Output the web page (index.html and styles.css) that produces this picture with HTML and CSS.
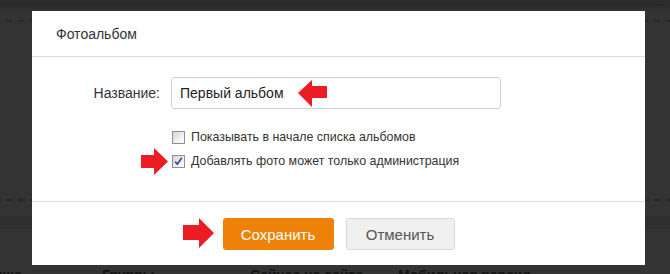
FILE: index.html
```html
<!DOCTYPE html>
<html lang="ru">
<head>
<meta charset="utf-8">
<title>Фотоальбом</title>
<link rel="stylesheet" href="styles.css">
</head>
<body>
<div class="page">
  <div class="topbar"><div class="topline"></div></div>
  <div class="dash dash-top"></div>
  <div class="dash dash-bottom"></div>
  <div class="band"></div>
  <div class="links">
    <span class="lnk lnk0">нша</span>
    <span class="lnk lnk1">Группы</span>
    <span class="lnk lnk2">Сейчас на сайте</span>
    <span class="lnk lnk3">Мобильная версия</span>
  </div>
</div>

<div class="modal">
  <div class="modal-head">Фотоальбом</div>
  <div class="modal-body">
    <div class="field">
      <label class="field-label">Название:</label>
      <div class="input">Первый альбом</div>
    </div>
    <div class="checks">
      <div class="check-row">
        <span class="box"></span>
        <span class="check-text">Показывать в начале списка альбомов</span>
      </div>
      <div class="check-row">
        <span class="box checked">
          <svg width="11" height="11" viewBox="0 0 11 11"><path d="M2.2 5.6 L4.4 8.2 L8.8 1.8" fill="none" stroke="#34489a" stroke-width="1.7"/></svg>
        </span>
        <span class="check-text">Добавлять фото может только администрация</span>
      </div>
    </div>
  </div>
  <div class="modal-foot">
    <button class="btn btn-save">Сохранить</button>
    <button class="btn btn-cancel">Отменить</button>
  </div>
</div>

<svg class="arrow arrow1" width="30" height="28" viewBox="0 0 30 28"><polygon points="0,13 14,0 14,6 29,6 29,18 14,18 14,27" fill="#ed1c24"/></svg>
<svg class="arrow arrow2" width="28" height="28" viewBox="0 0 28 28"><polygon points="0,7 13,7 13,0 27,13.5 13,27 13,20 0,20" fill="#ed1c24"/></svg>
<svg class="arrow arrow3" width="31" height="31" viewBox="0 0 31 31"><polygon points="0,7 16,7 16,0 31,15 16,30 16,22 0,22" fill="#ed1c24"/></svg>
</body>
</html>
```

FILE: styles.css
```css
html, body {
  margin: 0;
  padding: 0;
}
body {
  width: 670px;
  height: 274px;
  overflow: hidden;
  background: #333333;
  font-family: "Liberation Sans", Arial, sans-serif;
  position: relative;
}
.page {
  display: flex;
  flex-direction: column;
}
.topbar {
  height: 9px;
  background: #2d2d2d;
  padding-top: 4px;
  box-sizing: border-box;
}
.topline {
  height: 1px;
  background: #262626;
  margin-right: 8px;
}
.dash {
  height: 2px;
  background: repeating-linear-gradient(90deg, transparent 0 6px, #272727 6px 12px);
}
.dash-top {
  margin-top: 11px;
}
.dash-bottom {
  margin-top: 177px;
}
.band {
  margin-top: 15px;
  height: 13px;
  background: #2e2e2e;
}
.links {
  margin-top: 38px;
  height: 20px;
  font-size: 14px;
  font-weight: bold;
  color: #141414;
  display: flex;
}
.lnk0 { margin-left: -6px; width: 108px; }
.lnk1 { width: 148px; }
.lnk2 { width: 148px; }

.modal {
  position: absolute;
  left: 32px;
  top: 11px;
  width: 613px;
  height: 254px;
  background: #fff;
  display: flex;
  flex-direction: column;
}
.modal-head {
  height: 45px;
  border-bottom: 1px solid #dcdcdc;
  padding-left: 24px;
  display: flex;
  align-items: center;
  font-size: 14px;
  color: #333;
}
.modal-body {
  padding-top: 20px;
  height: 124px;
  border-bottom: 1px solid #dcdcdc;
}
.field {
  display: grid;
  grid-template-columns: 128px 330px;
  column-gap: 11px;
  align-items: center;
}
.field-label {
  text-align: right;
  font-size: 14px;
  color: #333;
}
.input {
  height: 32px;
  box-sizing: border-box;
  border: 1px solid #cfcfcf;
  border-radius: 3px;
  padding-left: 8px;
  display: flex;
  align-items: center;
  font-size: 14px;
  color: #222;
}
.checks {
  margin-top: 16px;
  margin-left: 140px;
}
.check-row {
  height: 24px;
  display: flex;
  align-items: center;
  gap: 6px;
}
.box {
  width: 13px;
  height: 13px;
  box-sizing: border-box;
  border: 1px solid #8e8f8f;
  background: linear-gradient(135deg, #d6d6d6, #f4f4f4 70%, #fff);
  display: flex;
  align-items: center;
  justify-content: center;
}
.box svg { display: block; }
.check-text {
  font-size: 12.4px;
  color: #333;
}
.modal-foot {
  flex: 1;
  display: flex;
  justify-content: center;
  gap: 12px;
  padding-top: 16px;
}
.btn {
  height: 32px;
  border-radius: 3px;
  font-family: "Liberation Sans", Arial, sans-serif;
  font-size: 15px;
  padding: 0;
}
.btn-save {
  width: 111px;
  background: #ee8208;
  border: none;
  color: #fff;
}
.btn-cancel {
  width: 109px;
  background: #f0f0f0;
  border: 1px solid #d8d8d8;
  color: #555;
}
.arrow {
  position: absolute;
  display: block;
}
.arrow1 { left: 298px; top: 80px; }
.arrow2 { left: 141px; top: 148px; }
.arrow3 { left: 183px; top: 218px; }
```
